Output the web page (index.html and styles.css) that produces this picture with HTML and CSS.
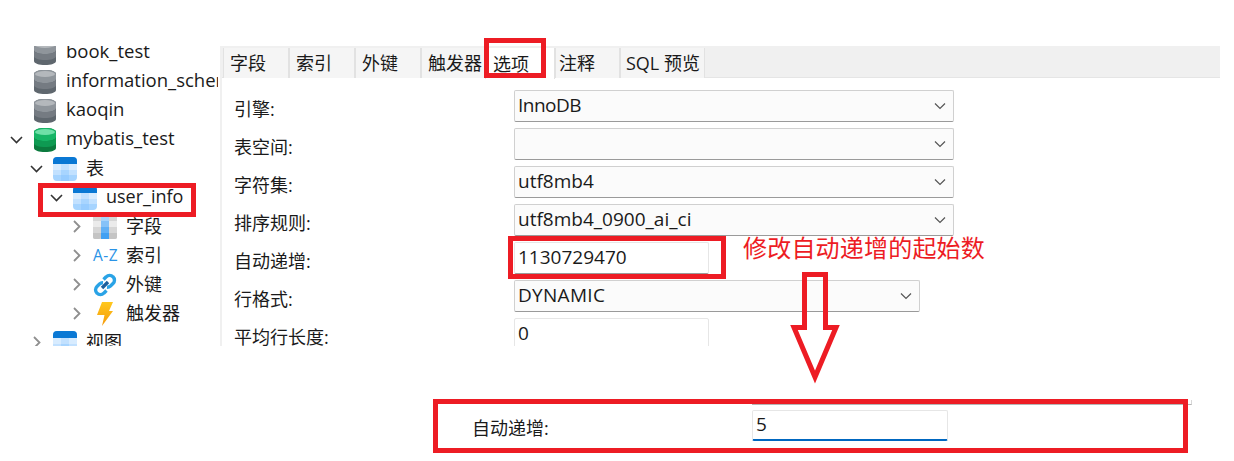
FILE: index.html
```html
<!DOCTYPE html>
<html lang="zh">
<head>
<meta charset="utf-8">
<title>表选项</title>
<link rel="stylesheet" href="styles.css">
</head>
<body>
<svg class="defs" width="0" height="0">
  <defs>
    <symbol id="db-grey" viewBox="0 0 22 24">
      <path d="M0 4C0 1.500 5 0 11 0s11 1.500 11 4v16c0 2.500-5 4-11 4S0 22.500 0 20z" fill="#5f676e"/>
      <path d="M0 4C0 1.500 5 0 11 0s11 1.500 11 4v5c0 2.500-5 4-11 4S0 11.500 0 9z" fill="#8f959b"/>
      <path d="M0 9c0 2.500 5 4 11 4s11-1.500 11-4v6c0 2.500-5 4-11 4S0 17.500 0 15z" fill="#757b82"/>
      <ellipse cx="11" cy="4" rx="10" ry="3" fill="#b4b8bc"/>
    </symbol>
    <symbol id="db-green" viewBox="0 0 22 24">
      <path d="M0 4C0 1.500 5 0 11 0s11 1.500 11 4v16c0 2.500-5 4-11 4S0 22.500 0 20z" fill="#0b7a3e"/>
      <path d="M0 4C0 1.500 5 0 11 0s11 1.500 11 4v5c0 2.500-5 4-11 4S0 11.500 0 9z" fill="#17b566"/>
      <path d="M0 9c0 2.500 5 4 11 4s11-1.500 11-4v6c0 2.500-5 4-11 4S0 17.500 0 15z" fill="#0e9a52"/>
      <ellipse cx="11" cy="4" rx="10" ry="3" fill="#6fe0a8"/>
    </symbol>
    <symbol id="table" viewBox="0 0 24 24">
      <rect width="24" height="24" rx="4" fill="#a6d4ff"/>
      <path d="M0 4a4 4 0 0 1 4-4h16a4 4 0 0 1 4 4v3H0z" fill="#0a78d4"/>
      <path d="M0 7h8v6H0zM16 7h8v6h-8z" fill="#d8ecff"/>
      <path d="M8 7h8v6H8zM0 13h8v5H0zM16 13h8v5h-8z" fill="#c2e1ff"/>
      <path d="M8 13h8v5H8z" fill="#a8d5ff"/>
      <path d="M8 18h8v6H8z" fill="#97ccff"/>
    </symbol>
    <symbol id="fields" viewBox="0 0 24 24">
      <path d="M0 2a2 2 0 0 1 2-2h6v24H2a2 2 0 0 1-2-2z" fill="#d6d6d6"/>
      <path d="M16 0h6a2 2 0 0 1 2 2v20a2 2 0 0 1-2 2h-6z" fill="#d6d6d6"/>
      <path d="M0 6h8v6H0zM16 6h8v6h-8z" fill="#ebebeb"/>
      <path d="M0 18h8v4a2 2 0 0 1-2 2H2a2 2 0 0 1-2-2zM16 18h8v4a2 2 0 0 1-2 2h-6z" fill="#c4c4c4"/>
      <rect x="8" width="8" height="24" fill="#62b0f5"/>
      <rect x="8" width="8" height="6" fill="#a8d3fa"/>
      <rect x="8" y="6" width="8" height="6" fill="#86c2f8"/>
      <rect x="8" y="18" width="8" height="6" fill="#42a0f2"/>
    </symbol>
    <symbol id="link" viewBox="0 0 24 24">
      <path d="M10.500 6.500l2.700-2.700a4.700 4.700 0 0 1 6.800 0 4.700 4.700 0 0 1 0 6.800L17.500 13a4.700 4.700 0 0 1-3.500 1.200" fill="none" stroke="#2aa3e6" stroke-width="3.400"/>
      <path d="M13.500 17.500l-2.700 2.700a4.700 4.700 0 0 1-6.800 0 4.700 4.700 0 0 1 0-6.800L6.500 11a4.700 4.700 0 0 1 3.500-1.200" fill="none" stroke="#2aa3e6" stroke-width="3.400"/>
      <path d="M9 15l6-6" fill="none" stroke="#1d5f9c" stroke-width="3.400"/>
    </symbol>
    <linearGradient id="bolt-fill" x1="0" y1="0" x2="0" y2="1">
      <stop offset="0" stop-color="#ffc81e"/>
      <stop offset="1" stop-color="#f59a0c"/>
    </linearGradient>
    <symbol id="bolt" viewBox="0 0 16 24">
      <path d="M5 0h11l-4 9h4L5 24l2.500-11H0z" fill="url(#bolt-fill)"/>
    </symbol>
    <symbol id="chev-down" viewBox="0 0 13 8">
      <path d="M1 1l5.500 5.500L12 1" fill="none" stroke="currentColor" stroke-width="1.600"/>
    </symbol>
    <symbol id="caret-down" viewBox="0 0 12 8">
      <path d="M1 1.500l5 5 5-5" fill="none" stroke="currentColor" stroke-width="1.200"/>
    </symbol>
    <symbol id="chev-right" viewBox="0 0 8 13">
      <path d="M1 1l5.500 5.500L1 12" fill="none" stroke="currentColor" stroke-width="1.800"/>
    </symbol>
  </defs>
</svg>

<main class="page">
  <section class="window">
    <nav class="tree">
      <div class="node lv0"><span class="twist"></span><svg class="icon"><use href="#db-grey"/></svg><span class="name">book_test</span></div>
      <div class="node lv0"><span class="twist"></span><svg class="icon"><use href="#db-grey"/></svg><span class="name">information_schema</span></div>
      <div class="node lv0"><span class="twist"></span><svg class="icon"><use href="#db-grey"/></svg><span class="name">kaoqin</span></div>
      <div class="node lv0"><svg class="twist"><use href="#chev-down"/></svg><svg class="icon"><use href="#db-green"/></svg><span class="name">mybatis_test</span></div>
      <div class="node lv1"><svg class="twist"><use href="#chev-down"/></svg><svg class="icon wide"><use href="#table"/></svg><span class="name">表</span></div>
      <div class="node lv2"><svg class="twist"><use href="#chev-down"/></svg><svg class="icon wide"><use href="#table"/></svg><span class="name">user_info</span></div>
      <div class="node lv3"><svg class="twist right"><use href="#chev-right"/></svg><svg class="icon wide"><use href="#fields"/></svg><span class="name">字段</span></div>
      <div class="node lv3"><svg class="twist right"><use href="#chev-right"/></svg><span class="icon wide az">A-Z</span><span class="name">索引</span></div>
      <div class="node lv3"><svg class="twist right"><use href="#chev-right"/></svg><svg class="icon wide"><use href="#link"/></svg><span class="name">外键</span></div>
      <div class="node lv3"><svg class="twist right"><use href="#chev-right"/></svg><svg class="icon wide bolt"><use href="#bolt"/></svg><span class="name">触发器</span></div>
      <div class="node lv1 closed"><svg class="twist right"><use href="#chev-right"/></svg><svg class="icon wide"><use href="#table"/></svg><span class="name">视图</span></div>
    </nav>
    <div class="panel">
      <div class="tabs">
        <span class="tab">字段</span>
        <span class="tab">索引</span>
        <span class="tab">外键</span>
        <span class="tab">触发器</span>
        <span class="tab active">选项</span>
        <span class="tab">注释</span>
        <span class="tab">SQL 预览</span>
      </div>
      <div class="form">
        <div class="row"><label>引擎:</label><div class="control select"><span class="tight">InnoDB</span><svg class="caret"><use href="#caret-down"/></svg></div></div>
        <div class="row"><label>表空间:</label><div class="control select"><svg class="caret"><use href="#caret-down"/></svg></div></div>
        <div class="row"><label>字符集:</label><div class="control select">utf8mb4<svg class="caret"><use href="#caret-down"/></svg></div></div>
        <div class="row"><label>排序规则:</label><div class="control select">utf8mb4_0900_ai_ci<svg class="caret"><use href="#caret-down"/></svg></div></div>
        <div class="row"><label>自动递增:</label><div class="control input">1130729470</div></div>
        <div class="row"><label>行格式:</label><div class="control select short">DYNAMIC<svg class="caret"><use href="#caret-down"/></svg></div></div>
        <div class="row"><label>平均行长度:</label><div class="control input light">0</div></div>
      </div>
    </div>
  </section>

  <section class="pasted">
    <label>自动递增:</label>
    <div class="control input focused">5</div>
  </section>

  <div class="edge"></div>
  <div class="mark mark-tab"></div>
  <div class="mark mark-node"></div>
  <div class="mark mark-input"></div>
  <div class="mark mark-pasted"></div>
  <p class="note">修改自动递增的起始数</p>
  <svg class="arrow" width="60" height="120" viewBox="0 0 60 120">
    <path d="M14.500 2.500h21v53H46L25 105 4 55.500h10.500z" fill="none" stroke="#ed1c24" stroke-width="5"/>
  </svg>
</main>
</body>
</html>
```

FILE: styles.css
```css
* { box-sizing: border-box; }

html, body {
  margin: 0;
  background: #fff;
}

body {
  font-family: "Open Sans", "Noto Sans CJK SC", sans-serif;
  font-size: 18px;
  color: #1a1a1a;
}

.defs { position: absolute; }

.page {
  position: relative;
  width: 1234px;
  height: 461px;
  overflow: hidden;
  padding-top: 38px;
}

.window {
  display: flex;
  height: 308px;
}

.tree {
  width: 222px;
  flex: none;
  overflow: hidden;
  border-right: 2px solid #f0f0f0;
  clip-path: inset(8px 0 0 0);
}

.node {
  display: flex;
  align-items: center;
  height: 29px;
  width: 218px;
  white-space: nowrap;
  overflow: hidden;
}

.name { padding-bottom: 4px; }

.lv0 { font-size: 18.5px; padding-left: 10px; }
.lv1 { padding-left: 30px; }
.lv2 { padding-left: 50px; }
.lv3 { padding-left: 73px; }
.closed { padding-left: 33px; }

.twist {
  flex: none;
  width: 13px;
  height: 8px;
  margin-right: 11px;
  color: #333;
}

.lv1 .twist, .lv2 .twist { margin-right: 10px; }

.twist.right,
.lv1 .twist.right {
  width: 8px;
  height: 13px;
  margin-right: 12px;
  color: #8f8f8f;
}

.icon {
  flex: none;
  width: 22px;
  height: 24px;
  margin-right: 10px;
}

.icon.wide { width: 24px; height: 24px; margin-right: 9px; }

.az {
  font-size: 15.500px;
  font-weight: 400;
  line-height: 24px;
  color: #2a93e6;
  text-align: center;
  white-space: nowrap;
  letter-spacing: 0.500px;
  margin-bottom: 2px;
}

.panel {
  flex: 1;
  min-width: 0;
  padding-top: 8px;
  margin-right: 14px;
  overflow: hidden;
}

.tabs {
  display: flex;
  height: 32px;
  padding-left: 1px;
  background: #f0f0f0;
  border-bottom: 1px solid #e5e5e5;
}

.tab {
  display: flex;
  align-items: center;
  flex: none;
  height: 30px;
  margin-top: 2px;
  padding: 0 0 2px 6px;
  width: 66px;
  background: #f5f5f5;
  border-right: 1px solid #e2e2e2;
  border-left: 1px solid #e2e2e2;
  white-space: nowrap;
}

.tab:nth-child(4) { width: 64px; }
.tab.active { width: 70px; height: 31px; background: #fff; padding-left: 7px; }
.tab:nth-child(6) { width: 65px; padding-left: 3px; }
.tab:nth-child(7) { width: 85px; padding-left: 5px; }

.form {
  display: flex;
  flex-direction: column;
  gap: 6px;
  padding: 12px 0 0 12px;
}

.row {
  display: flex;
  align-items: center;
  height: 32px;
  flex: none;
}

.row label, .pasted label {
  width: 280px;
  flex: none;
  padding-top: 3px;
  font-size: 18px;
}

.control {
  position: relative;
  display: flex;
  align-items: center;
  height: 32px;
  padding: 0 3px 1px 3px;
  background: #fff;
  border: 1px solid #d0d0d0;
  border-radius: 2px;
  font-size: 19px;
  line-height: 1;
}

.tight { letter-spacing: -0.500px; }

.select {
  width: 440px;
  background: #fbfbfb;
  border-bottom-color: #9a9a9a;
}

.select.short { width: 406px; letter-spacing: 0.300px; }

.input {
  width: 195px;
  border-color: #e6e6e6;
  border-bottom-color: #9a9a9a;
}

.input.light { border-bottom-color: #e6e6e6; }

.caret {
  position: absolute;
  right: 7px;
  top: 11px;
  width: 12px;
  height: 8px;
  color: #555;
}

.pasted {
  display: flex;
  align-items: center;
  height: 31px;
  margin: 64px 0 0 472px;
}

.input.focused {
  width: 196px;
  height: 31px;
  border-bottom: 2px solid #0067c0;
}

.edge {
  position: absolute;
  left: 752px;
  top: 400px;
  width: 440px;
  height: 5px;
  border-right: 1px solid #d8d8d8;
  border-bottom: 1px solid #b5b5b5;
}

.mark {
  position: absolute;
  border: 5px solid #ed1c24;
}

.mark-tab { left: 484px; top: 38px; width: 62px; height: 40px; }
.mark-node { left: 38px; top: 183px; width: 158px; height: 34px; }
.mark-input { left: 508px; top: 236px; width: 218px; height: 43px; }
.mark-pasted { left: 433px; top: 399px; width: 755px; height: 54px; }

.note {
  position: absolute;
  left: 743px;
  top: 231px;
  margin: 0;
  font-size: 24px;
  line-height: 34px;
  letter-spacing: 0.200px;
  color: #ed1c24;
  white-space: nowrap;
}

.arrow {
  position: absolute;
  left: 790px;
  top: 272px;
}
```
